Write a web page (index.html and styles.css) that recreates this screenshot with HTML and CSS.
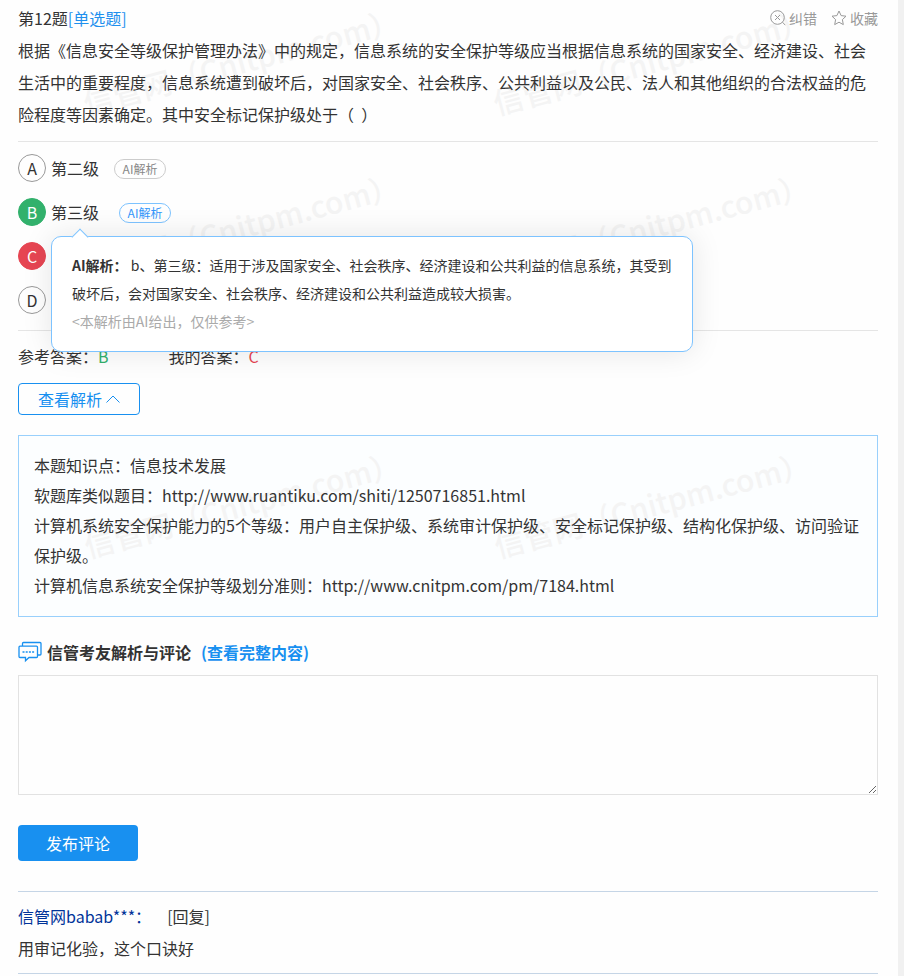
FILE: index.html
```html
<!DOCTYPE html>
<html lang="zh-CN">
<head>
    <meta charset="UTF-8">
    <meta name="viewport" content="width=device-width, initial-scale=1.0">
    <title>第12题</title>
    <link rel="stylesheet" href="styles.css">
</head>
<body>
    <main class="page">
        <section class="question">
            <div class="watermark" aria-hidden="true">
                <span>信管网（Cnitpm.com）</span>
                <span>信管网（Cnitpm.com）</span>
            </div>
            <div class="question-head">
                <div>第12题<a href="#" class="type">[单选题]</a></div>
                <div class="tools">
                    <button type="button" class="tool">
                        <svg width="16" height="16" viewBox="0 0 16 16" fill="none" stroke="currentColor">
                            <circle cx="7.5" cy="7.5" r="6.8"/>
                            <path d="M5 5l5 5M10 5l-5 5M12.5 12.2l2.8 3"/>
                        </svg>
                        纠错
                    </button>
                    <button type="button" class="tool">
                        <svg width="16" height="16" viewBox="0 0 16 16" fill="none" stroke="currentColor" stroke-linejoin="round">
                            <path d="M8 1l2.1 4.6 4.9.6-3.6 3.4.9 5L8 12.200l-4.300 2.400.9-5L1 6.200l4.900-.6z"/>
                        </svg>
                        收藏
                    </button>
                </div>
            </div>
            <p class="question-text">根据《信息安全等级保护管理办法》中的规定，信息系统的安全保护等级应当根据信息系统的国家安全、经济建设、社会生活中的重要程度，信息系统遭到破坏后，对国家安全、社会秩序、公共利益以及公民、法人和其他组织的合法权益的危险程度等因素确定。其中安全标记保护级处于（&nbsp;&nbsp;）</p>
        </section>

        <section class="options">
            <div class="watermark" aria-hidden="true">
                <span>信管网（Cnitpm.com）</span>
                <span>信管网（Cnitpm.com）</span>
            </div>
            <div class="option">
                <button type="button" class="letter">A</button>
                <span>第二级</span>
                <button type="button" class="ai-btn">AI解析</button>
            </div>
            <div class="option open">
                <button type="button" class="letter right">B</button>
                <span>第三级</span>
                <button type="button" class="ai-btn">AI解析</button>
                <div class="ai-pop">
                    <p><b>AI解析：</b> b、第三级：适用于涉及国家安全、社会秩序、经济建设和公共利益的信息系统，其受到破坏后，会对国家安全、社会秩序、经济建设和公共利益造成较大损害。</p>
                    <p class="note">&lt;本解析由AI给出，仅供参考&gt;</p>
                </div>
            </div>
            <div class="option">
                <button type="button" class="letter wrong">C</button>
            </div>
            <div class="option">
                <button type="button" class="letter">D</button>
            </div>
        </section>

        <div class="answers">
            <div>参考答案：<span class="green">B</span></div>
            <div>我的答案：<span class="red">C</span></div>
        </div>
        <button type="button" class="toggle">
            查看解析
            <svg width="14" height="8" viewBox="0 0 14 8" fill="none" stroke="currentColor">
                <path d="M.5 7.500L7 1l6.500 6.500"/>
            </svg>
        </button>

        <section class="analysis">
            <div class="watermark" aria-hidden="true">
                <span>信管网（Cnitpm.com）</span>
                <span>信管网（Cnitpm.com）</span>
            </div>
            <p>本题知识点：信息技术发展</p>
            <p>软题库类似题目：http://www.ruantiku.com/shiti/1250716851.html</p>
            <p>计算机系统安全保护能力的5个等级：用户自主保护级、系统审计保护级、安全标记保护级、结构化保护级、访问验证保护级。</p>
            <p>计算机信息系统安全保护等级划分准则：http://www.cnitpm.com/pm/7184.html</p>
        </section>

        <form class="comment-form">
            <h2 class="comment-title">
                <svg width="24" height="22" viewBox="0 0 24 22" fill="none" stroke="currentColor" stroke-width="1.300">
                    <path d="M4.500 5V2.500q0-1 1-1h16.500q1 0 1 1v10.500q0 1-1 1h-2"/>
                    <path d="M2 5.200h16.500q1 0 1 1v9.300q0 1-1 1H11l-3.500 3.300v-3.300H2q-1 0-1-1V6.200q0-1 1-1z"/>
                    <path d="M4.500 11h2M7.700 11h2M10.900 11h2M14.100 11h2"/>
                </svg>
                <label for="comment">信管考友解析与评论</label>
                <a href="#">(查看完整内容)</a>
            </h2>
            <textarea id="comment" class="comment-box"></textarea>
            <button type="button" class="submit">发布评论</button>
        </form>

        <div class="comments">
            <article class="comment">
                <div class="comment-head">
                    <span class="user">信管网babab***：</span>
                    <a href="#">[回复]</a>
                </div>
                <p>用审记化验，这个口诀好</p>
            </article>
        </div>
    </main>
</body>
</html>
```
FILE: styles.css
```css
* {
    margin: 0;
    padding: 0;
    box-sizing: border-box;
}

body {
    background: #f1f1f1;
    padding-right: 6px;
    color: #333;
    font-family: "Noto Sans CJK SC", sans-serif;
    font-size: 16px;
    line-height: 32px;
}

button,
textarea {
    font: inherit;
    color: inherit;
}

button {
    background: none;
    border: none;
    cursor: pointer;
}

a {
    color: inherit;
    text-decoration: none;
}

.page {
    min-height: 100vh;
    padding: 2px 20px 0 18px;
    background: #fefefe;
}

/* tiled site name behind the text */
.watermark {
    position: absolute;
    top: 0;
    left: 60px;
    display: flex;
    gap: 80px;
    z-index: -1;
    pointer-events: none;
}

.watermark span {
    width: 330px;
    font-size: 30px;
    font-weight: 500;
    line-height: 32px;
    white-space: nowrap;
    color: #f4f4f4;
    transform: rotate(-15deg);
}

.question,
.options,
.analysis {
    position: relative;
    z-index: 0;
}

.question {
    padding-bottom: 11px;
    border-bottom: 1px solid #e5e5e5;
}

.question .watermark {
    top: 42px;
}

.question-head {
    display: flex;
    justify-content: space-between;
}

.type {
    color: #1e90ee;
}

.tools {
    display: flex;
    gap: 14px;
}

.tool {
    display: flex;
    align-items: center;
    gap: 3px;
    font-size: 14px;
    color: #999;
}

.options {
    z-index: 1;
    display: flex;
    flex-direction: column;
    gap: 16px;
    padding: 12px 0 16px;
    border-bottom: 1px solid #e5e5e5;
}

.options .watermark {
    top: 67px;
}

.option {
    position: relative;
    display: flex;
    align-items: center;
    height: 28px;
}

.letter {
    width: 28px;
    height: 28px;
    margin-right: 5px;
    border: 1px solid #999;
    border-radius: 50%;
    line-height: 24px;
}

.letter.right {
    border-color: #32b16c;
    background: #32b16c;
    color: #fff;
}

.letter.wrong {
    border-color: #e64552;
    background: #e64552;
    color: #fff;
}

.ai-btn {
    width: 52px;
    height: 20px;
    margin: 2px 0 0 15px;
    border: 1px solid #ccc;
    border-radius: 10px;
    font-size: 12px;
    line-height: 18px;
    color: #888;
}

.open .ai-btn {
    margin-left: 20px;
    border-color: #7dc3ff;
    color: #3396fb;
}

.ai-pop {
    position: absolute;
    top: 38px;
    left: 33px;
    width: 642px;
    padding: 14px 20px 16px;
    border: 1px solid #7dc3ff;
    border-radius: 10px;
    background: #fff;
    box-shadow: 0 0 30px rgba(0, 0, 0, 0.1);
    font-size: 14px;
    line-height: 28px;
    z-index: 2;
}

.ai-pop::before {
    content: "";
    position: absolute;
    top: -6px;
    left: 22px;
    width: 11px;
    height: 11px;
    border: 1px solid #7dc3ff;
    border-right: none;
    border-bottom: none;
    background: #fff;
    transform: rotate(45deg);
}

.note {
    color: #aaa;
}

.answers {
    display: flex;
    gap: 60px;
    padding: 9px 0 11px;
}

.green {
    color: #32b16c;
}

.red {
    color: #e64552;
}

.toggle {
    display: flex;
    align-items: center;
    justify-content: center;
    gap: 4px;
    width: 122px;
    height: 32px;
    border: 1px solid #1890f0;
    border-radius: 4px;
    line-height: 30px;
    color: #1890f0;
}

.analysis {
    margin: 20px 0;
    padding: 14px 15px 16px;
    border: 1px solid #99d0fc;
    background: #fcfeff;
    line-height: 30px;
}

.analysis .watermark {
    top: 51px;
}

.comment-title {
    display: flex;
    align-items: center;
    gap: 5px;
    margin: -1px 0 7px;
    font-size: 16px;
    line-height: 32px;
}

.comment-title svg {
    color: #1890f0;
}

.comment-title a {
    margin-left: 5px;
    color: #1890f0;
}

.comment-box {
    display: block;
    width: 100%;
    height: 120px;
    padding: 10px;
    border: 1px solid #e2e2e2;
    background: #fefefe;
    outline: none;
    resize: vertical;
}

.submit {
    width: 120px;
    height: 36px;
    margin: 30px 0;
    border-radius: 4px;
    background: #1890f0;
    color: #fff;
}

.comments {
    border-top: 1px solid #c5d5e6;
}

.comment {
    padding: 8px 0 9px;
    border-bottom: 1px solid #c5d5e6;
}

.comment-head {
    display: flex;
    gap: 16px;
}

.user {
    color: #039;
}
```
